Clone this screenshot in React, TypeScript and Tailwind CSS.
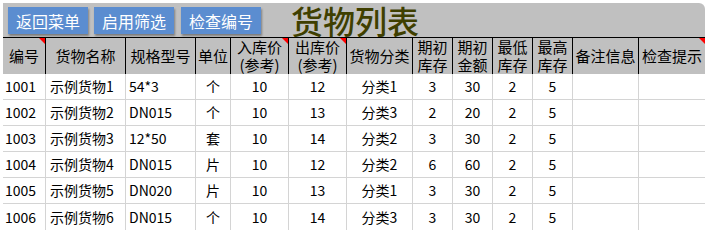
import React from "react";

type Row = {
  id: string;
  name: string;
  spec: string;
  unit: string;
  inPrice: number;
  outPrice: number;
  category: string;
  openQty: number;
  openAmt: number;
  minQty: number;
  maxQty: number;
};

const rows: Row[] = [
  { id: "1001", name: "示例货物1", spec: "54*3", unit: "个", inPrice: 10, outPrice: 12, category: "分类1", openQty: 3, openAmt: 30, minQty: 2, maxQty: 5 },
  { id: "1002", name: "示例货物2", spec: "DN015", unit: "个", inPrice: 10, outPrice: 13, category: "分类3", openQty: 2, openAmt: 20, minQty: 2, maxQty: 5 },
  { id: "1003", name: "示例货物3", spec: "12*50", unit: "套", inPrice: 10, outPrice: 14, category: "分类2", openQty: 3, openAmt: 30, minQty: 2, maxQty: 5 },
  { id: "1004", name: "示例货物4", spec: "DN015", unit: "片", inPrice: 10, outPrice: 12, category: "分类2", openQty: 6, openAmt: 60, minQty: 2, maxQty: 5 },
  { id: "1005", name: "示例货物5", spec: "DN020", unit: "片", inPrice: 10, outPrice: 13, category: "分类1", openQty: 3, openAmt: 30, minQty: 2, maxQty: 5 },
  { id: "1006", name: "示例货物6", spec: "DN015", unit: "个", inPrice: 10, outPrice: 14, category: "分类3", openQty: 3, openAmt: 30, minQty: 2, maxQty: 5 },
];

const headers: { lines: string[]; note?: boolean }[] = [
  { lines: ["编号"], note: true },
  { lines: ["货物名称"] },
  { lines: ["规格型号"] },
  { lines: ["单位"] },
  { lines: ["入库价", "(参考)"], note: true },
  { lines: ["出库价", "(参考)"], note: true },
  { lines: ["货物分类"] },
  { lines: ["期初", "库存"] },
  { lines: ["期初", "金额"] },
  { lines: ["最低", "库存"] },
  { lines: ["最高", "库存"] },
  { lines: ["备注信息"] },
  { lines: ["检查提示"], note: true },
];

const cols = "grid-cols-[43px_80px_70px_35px_58px_58px_66px_40px_40px_40px_40px_66px_66px]";

function NoteMark() {
  return (
    <span className="absolute right-0 top-0 h-0 w-0 border-l-[6px] border-t-[6px] border-l-transparent border-t-[#ff0000]" />
  );
}

function SheetButton({ label }: { label: string }) {
  return (
    <button className="flex h-[27px] w-[80px] items-center justify-center bg-[#5b8dd0] text-[16px] text-white shadow-[1px_2px_2px_rgba(0,0,0,0.35)]">
      {label}
    </button>
  );
}

export default function App() {
  return (
    <div className="w-[709px] h-[239px] bg-white pl-[3px] pt-[3px] text-black [font-family:'Noto_Sans_CJK_SC','Liberation_Sans',sans-serif]">
      <div className="w-[702px]">
        <div className="flex h-[34px] items-start rounded-tr-[6px] bg-[#c0c0c0] pl-[5px] pt-[4px]">
          <SheetButton label="返回菜单" />
          <div className="ml-[6px]">
            <SheetButton label="启用筛选" />
          </div>
          <div className="ml-[7px]">
            <SheetButton label="检查编号" />
          </div>
          <span className="ml-[30px] mt-[-3px] text-[32px] font-medium leading-[32px] text-[#3f3f00]">
            货物列表
          </span>
        </div>

        <div className={`grid ${cols} border-t border-black`}>
          {headers.map((h, i) => (
            <div
              key={i}
              className={`relative flex h-[36px] flex-col items-center justify-center bg-[#c0c0c0] text-[15px] leading-[18px] ${
                i < headers.length - 1 ? "border-r border-black" : ""
              }`}
            >
              {h.lines.map((l) => (
                <span key={l} className="whitespace-nowrap">
                  {l}
                </span>
              ))}
              {h.note && <NoteMark />}
            </div>
          ))}
        </div>

        <div className={`grid ${cols} text-[14px]`}>
          {rows.map((r, ri) => {
            const last = ri === rows.length - 1;
            const cells: { v: string | number; align: string }[] = [
              { v: r.id, align: "justify-start pl-[2px]" },
              { v: r.name, align: "justify-start pl-[4px]" },
              { v: r.spec, align: "justify-start pl-[3px]" },
              { v: r.unit, align: "justify-center" },
              { v: r.inPrice, align: "justify-center" },
              { v: r.outPrice, align: "justify-center" },
              { v: r.category, align: "justify-center" },
              { v: r.openQty, align: "justify-center" },
              { v: r.openAmt, align: "justify-center" },
              { v: r.minQty, align: "justify-center" },
              { v: r.maxQty, align: "justify-center" },
              { v: "", align: "justify-center" },
              { v: "", align: "justify-center" },
            ];
            return cells.map((c, ci) => (
              <div
                key={`${ri}-${ci}`}
                className={`flex h-[26px] items-center whitespace-nowrap ${c.align} ${
                  ci < cells.length - 1 ? "border-r border-[#d4d4d4]" : ""
                } ${last ? "" : "border-b border-[#d4d4d4]"}`}
              >
                {c.v}
              </div>
            ));
          })}
        </div>
      </div>
    </div>
  );
}
